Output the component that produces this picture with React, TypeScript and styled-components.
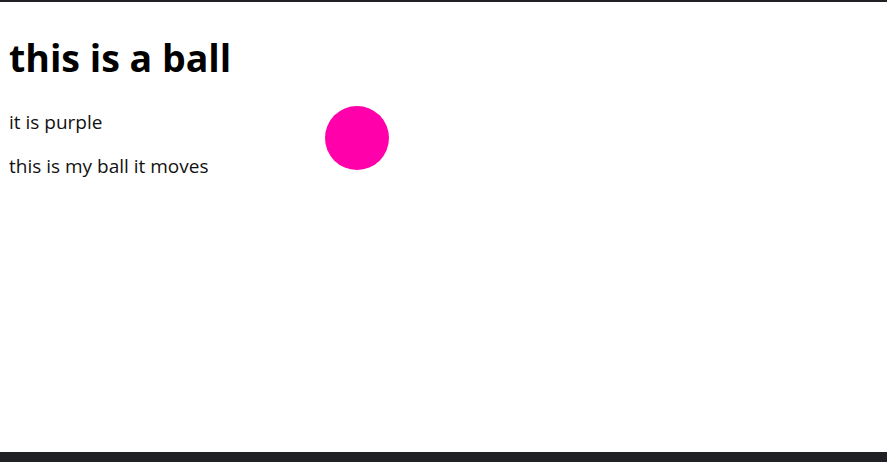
import React from 'react';
import styled, { createGlobalStyle } from 'styled-components';

const GlobalStyle = createGlobalStyle`
  html, body {
    margin: 0;
    padding: 0;
    height: 100%;
    background: #ffffff;
  }
  #root {
    height: 100%;
  }
`;

const App = () => {
  return (
    <>
      <GlobalStyle />
      <Page>
        <TopEdge />
        <Content>
          <Title>this is a ball</Title>
          <Line>it is purple</Line>
          <Line>this is my ball it moves</Line>
          <Ball />
        </Content>
        <BottomBar />
      </Page>
    </>
  );
};

export default App;

const Page = styled.div`
  display: flex;
  flex-direction: column;
  height: 100vh;
  font-family: 'Open Sans', 'Noto Sans', sans-serif;
  color: #000;
`;

const TopEdge = styled.div`
  height: 2px;
  background-color: #202124;
  flex-shrink: 0;
`;

const Content = styled.main`
  position: relative;
  flex: 1;
  padding: 0 9px;
`;

const Title = styled.h1`
  font-size: 37.5px;
  font-weight: 700;
  margin: 32.5px 0 29px;
  line-height: 46px;
`;

const Line = styled.p`
  font-size: 19px;
  margin: 0 0 20px;
  line-height: 24px;
  color: #111;
`;

const Ball = styled.div`
  position: absolute;
  left: 325px;
  top: 104px;
  width: 64px;
  height: 64px;
  border-radius: 50%;
  background-color: #ff00aa;
`;

const BottomBar = styled.div`
  height: 10px;
  background-color: #202124;
  flex-shrink: 0;
`;
